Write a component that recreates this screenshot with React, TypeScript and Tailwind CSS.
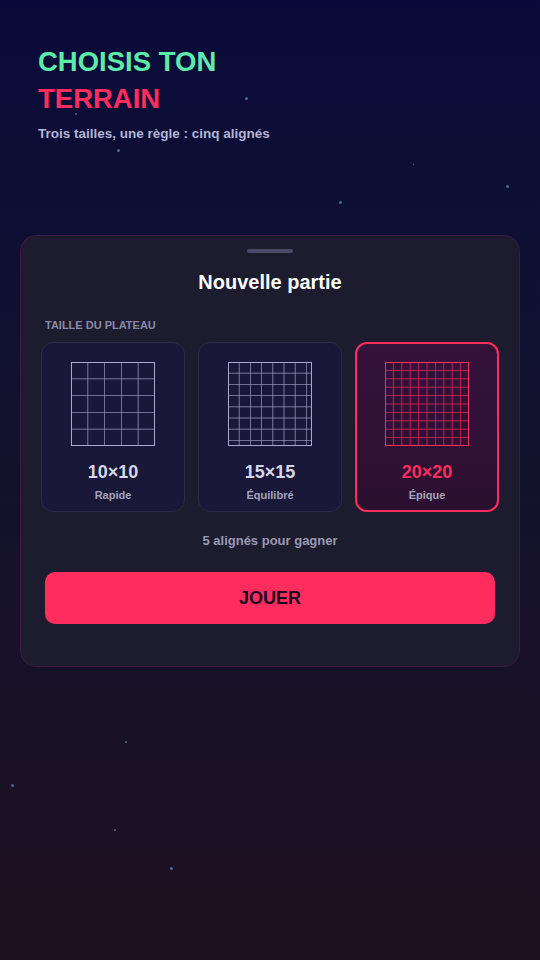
import React, { useState } from "react";

const sizes = [
  { n: 10, label: "10×10", sub: "Rapide" },
  { n: 15, label: "15×15", sub: "Équilibré" },
  { n: 20, label: "20×20", sub: "Épique" },
];

const stars = [
  { x: 245, y: 97, s: 3 },
  { x: 117, y: 149, s: 3 },
  { x: 75, y: 113, s: 2 },
  { x: 339, y: 201, s: 3 },
  { x: 506, y: 185, s: 3 },
  { x: 413, y: 164, s: 1 },
  { x: 66, y: 237, s: 2 },
  { x: 125, y: 741, s: 2 },
  { x: 11, y: 784, s: 3 },
  { x: 114, y: 829, s: 2 },
  { x: 170, y: 867, s: 3 },
];

function BoardIcon({ n, active }: { n: number; active: boolean }) {
  const size = 84;
  const step = size / (n / 2);
  const lines: number[] = [];
  for (let i = 1; i < n / 2; i++) lines.push(i * step);
  const color = active ? "#ff2d5e" : "#a8a8d0";
  return (
    <svg width={size} height={size} viewBox={`0 0 ${size} ${size}`}>
      <rect x={0.5} y={0.5} width={size - 1} height={size - 1} fill="none" stroke={color} strokeWidth={1} />
      {lines.map((p) => (
        <g key={p}>
          <line x1={p} y1={0} x2={p} y2={size} stroke={color} strokeWidth={0.8} opacity={0.85} />
          <line x1={0} y1={p} x2={size} y2={p} stroke={color} strokeWidth={0.8} opacity={0.85} />
        </g>
      ))}
    </svg>
  );
}

export default function App() {
  const [selected, setSelected] = useState(20);

  return (
    <div
      className="relative h-[960px] w-[540px] overflow-hidden bg-gradient-to-b from-[#0a0a3a] via-[#13122c] to-[#1e1020]"
      style={{ fontFamily: '"Liberation Sans", Arial, sans-serif' }}
    >
      {/* Stars */}
      {stars.map((s, i) => (
        <span
          key={i}
          className="absolute rounded-full bg-[#4a6a8a]"
          style={{ left: s.x, top: s.y, width: s.s, height: s.s }}
        />
      ))}

      <div className="relative flex flex-col px-[38px] pt-[43px]">
        <h1 className="text-[27.5px] font-bold leading-[37px]">
          <span className="block text-[#5eeaa8]">CHOISIS TON</span>
          <span className="block text-[#ff2d5e]">TERRAIN</span>
        </h1>
        <p className="mt-[7px] text-[13.5px] font-bold text-[#b4b4d4]">
          Trois tailles, une règle : cinq alignés
        </p>
      </div>

      <div className="relative mx-[20px] mt-[91px] flex flex-col rounded-[16px] border border-[#3b1a44] bg-[#1c1c2e] pb-[42px] pt-[13px]">
        <div className="mx-auto h-[4px] w-[46px] rounded-full bg-[#4c4c68]" />
        <h2 className="mt-[14px] text-center text-[20px] font-bold text-white">
          Nouvelle partie
        </h2>

        <div className="mt-[20px] px-[24px] text-[11px] font-bold text-[#8a8aa6]">
          TAILLE DU PLATEAU
        </div>

        <div className="mt-[8px] grid grid-cols-3 gap-[13px] px-[20px]">
          {sizes.map((s) => {
            const active = selected === s.n;
            return (
              <button
                key={s.n}
                onClick={() => setSelected(s.n)}
                className={
                  active
                    ? "flex h-[170px] flex-col items-center rounded-[12px] border-2 border-[#ff2d5e] bg-gradient-to-b from-[#34123a] to-[#2c1030] pt-[18px]"
                    : "flex h-[170px] flex-col items-center rounded-[12px] border border-[#2a2a48] bg-[#1a1838] pt-[19px]"
                }
              >
                <BoardIcon n={s.n} active={active} />
                <span
                  className={
                    active
                      ? "mt-[14px] text-[18px] font-bold leading-[24px] text-[#ff2d5e]"
                      : "mt-[14px] text-[18px] font-bold leading-[24px] text-[#d6d6e6]"
                  }
                >
                  {s.label}
                </span>
                <span className="mt-[3px] text-[11px] font-bold text-[#a4a4bc]">{s.sub}</span>
              </button>
            );
          })}
        </div>

        <p className="mt-[19px] text-center text-[13px] font-bold text-[#9a9ab2]">
          5 alignés pour gagner
        </p>

        <div className="mt-[22px] px-[24px]">
          <button className="h-[52px] w-full rounded-[10px] bg-[#ff2d5e] text-[18px] font-bold text-[#1a0a1e]">
            JOUER
          </button>
        </div>
      </div>
    </div>
  );
}
